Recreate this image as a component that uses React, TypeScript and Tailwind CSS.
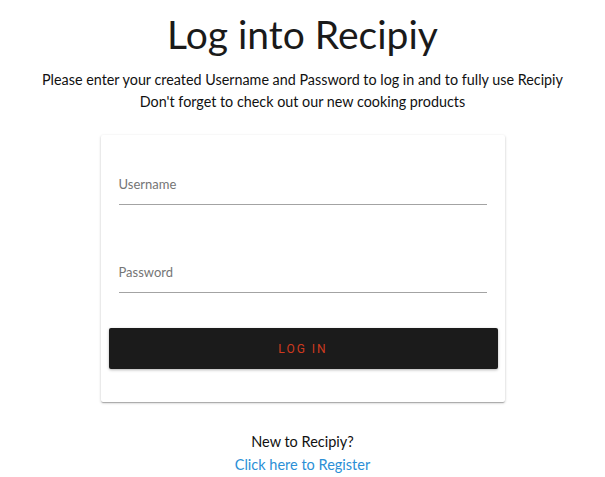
export default function App() {
  return (
    <div className="min-h-[477px] bg-white flex flex-col items-center font-['Lato','Noto_Sans',sans-serif] text-[#1a1a1a]">
      <h1 className="mt-[12px] text-[39px] leading-[44px] font-normal">Log into Recipiy</h1>
      <div className="mt-[13px] text-[14.35px] leading-[22px] text-center text-[#111]">
        <p>Please enter your created Username and Password to log in and to fully use Recipiy</p>
        <p>Don't forget to check out our new cooking products</p>
      </div>

      {/* Login card */}
      <div className="mt-[22px] w-[404px] bg-white rounded-[2px] shadow-[0_1px_3px_rgba(0,0,0,0.2),0_1px_1px_rgba(0,0,0,0.14),0_2px_1px_-1px_rgba(0,0,0,0.12)] pt-[39px] pb-[33px]">
        <div className="px-[18px]">
          <div className="h-[31px] border-b border-[#a3a3a3]">
            <span className="block text-[13px] leading-[20px] text-[#757575]">Username</span>
          </div>
          <div className="mt-[57px] h-[31px] border-b border-[#a3a3a3]">
            <span className="block text-[13px] leading-[20px] text-[#757575]">Password</span>
          </div>
        </div>
        <div className="mt-[35px] pl-[8px] pr-[7px]">
          <button className="w-full h-[41px] bg-[#1b1b1b] rounded-[2px] shadow-[0_1px_3px_rgba(0,0,0,0.3)] font-['Roboto','Liberation_Sans',sans-serif] text-[12px] tracking-[2px] text-[#cf3a1f]">
            LOG IN
          </button>
        </div>
      </div>

      <div className="mt-[28px] text-[14.5px] leading-[23px] text-center">
        <p className="text-[#111]">New to Recipiy?</p>
        <a className="text-[#2b8fd6]">Click here to Register</a>
      </div>
    </div>
  );
}
